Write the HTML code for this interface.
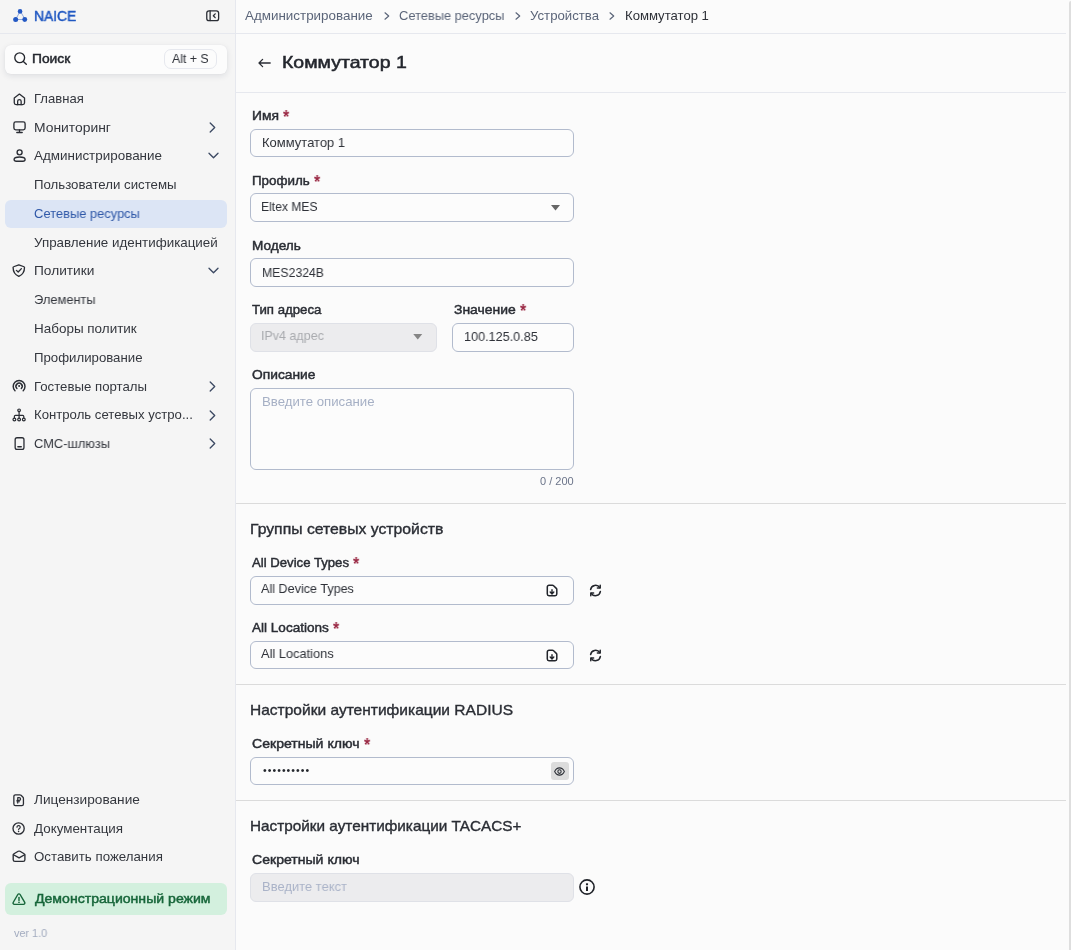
<!DOCTYPE html>
<html lang="ru"><head><meta charset="utf-8"><title>NAICE — Коммутатор 1</title>
<style>
html,body{margin:0;padding:0}
body{width:1071px;height:950px;position:relative;overflow:hidden;background:#fbfbfb;font-family:"Liberation Sans",sans-serif}
.abs,.t,.box,.ln,svg.i{position:absolute}
.t{will-change:transform;white-space:nowrap;line-height:20px;height:20px;transform-origin:0 50%;font-family:"Liberation Sans",sans-serif}
.t.sec{-webkit-text-stroke:0.35px currentColor}
.t.sb{-webkit-text-stroke:0.46px currentColor}
.t.sb2{-webkit-text-stroke:0.5px currentColor}
.side{left:0;top:0;width:235px;height:950px;background:#f5f5f5;border-right:1px solid #e6e8ee}
.ln{height:1px;background:#e6e8ee}
.ln.s{background:#dbdbdb}
.box{box-sizing:border-box;border:1px solid #b2bbcd;border-radius:6px;background:#fcfcfc}
.box.dis{background:#ececee;border-color:#dfe1e7}
.pill{position:absolute;border-radius:6px}
svg.i{overflow:visible;fill:none;stroke:#2a2d34;stroke-width:1.35;stroke-linecap:round;stroke-linejoin:round}
aside,main,nav,header,form,section{display:contents}
</style></head><body>
<aside>
<nav>
<div class="abs side"></div>
<div class="ln" style="left:0;top:33px;width:235px"></div>
<div class="pill" style="left:5px;top:45px;width:222px;height:29px;background:#fcfcfc;box-shadow:0 2px 6px rgba(20,30,60,.10),0 0 1px rgba(20,30,60,.08)"></div>
<div class="abs" style="left:164px;top:49px;width:53px;height:20px;box-sizing:border-box;border:1px solid #e6e8ee;border-radius:7px;background:#fcfcfc"></div>
<div class="pill" style="left:5px;top:200px;width:222px;height:28px;background:#dce5f5"></div>
<div class="pill" style="left:5px;top:883px;width:222px;height:31.5px;background:#d3f0de"></div>
<svg class="i" style="left:13px;top:9px;stroke:none;fill:#2459c4" width="15" height="14" viewBox="0 0 15 14"><circle cx="7.050" cy="2.400" r="2.300"/><circle cx="2.650" cy="10.500" r="2.500"/><circle cx="11.750" cy="10.450" r="2.450"/><path d="M7.050 2.400 2.650 10.500h9.100z" fill="none" stroke="#2459c4" stroke-width=".75" stroke-opacity=".65"/></svg>
<svg class="i" style="left:205.6px;top:10px" width="13.4" height="11.5" viewBox="0 0 14 12"><rect x=".8" y=".8" width="12.4" height="10.4" rx="2.4"/><path d="M4.3 1v10" /><path d="M9.6 4 7.7 6l1.9 2"/></svg>
<svg class="i" style="left:13.5px;top:52.1px;stroke:#24272e" width="13" height="13" viewBox="0 0 13 13"><circle cx="5.7" cy="5.7" r="4.9"/><path d="M9.4 9.4 12.3 12.3"/></svg>
<svg class="i" style="left:12.9px;top:92.9px" width="12.8" height="12.6" viewBox="0 0 13 13"><path d="M1.2 5.2 6.5 1.1l5.3 4.1v4.9a1.9 1.9 0 0 1-1.9 1.9H3.1a1.9 1.9 0 0 1-1.9-1.9z"/><path d="M4.7 12V8.6a1.8 1.8 0 0 1 3.6 0V12"/></svg>
<svg class="i" style="left:12.5px;top:121px" width="13" height="13" viewBox="0 0 13 13"><rect x=".9" y=".9" width="11.2" height="7.9" rx="1.8"/><path d="M6.5 8.9v2.5M3.8 11.5h5.4"/></svg>
<svg class="i" style="left:12.5px;top:149px" width="13" height="13" viewBox="0 0 13 13"><circle cx="6.6" cy="3.3" r="2.5"/><path d="M1.1 10.6c0-1.7 2.4-2.6 5.5-2.6s5.5.9 5.5 2.6c0 1.2-1 1.6-2.2 1.6H3.300c-1.200 0-2.200-.4-2.200-1.600z"/></svg>
<svg class="i" style="left:12.1px;top:264.3px" width="14" height="13.3" viewBox="0 0 14 14" preserveAspectRatio="none"><path d="M6.8.9 1.6 2.9c-.3.1-.5.4-.5.700 0 4.600 1.600 7.400 5.700 9.400 4.100-2 5.700-4.800 5.700-9.400 0-.3-.2-.6-.5-.7z"/><path d="M4.400 6.700 6.200 8.400 9.400 4.900"/></svg>
<svg class="i" style="left:12px;top:379px;stroke-width:1.45" width="14" height="14" viewBox="0 0 14 14"><path d="M3 11.700A5.900 5.900 0 1 1 11.200 11.700"/><path d="M4.900 9.500A3.100 3.100 0 1 1 9.300 9.500"/><circle cx="7.100" cy="7.100" r="1" fill="#2a2d34" stroke="none"/></svg>
<svg class="i" style="left:12px;top:408px;stroke-width:1.2" width="14" height="14" viewBox="0 0 14 14"><circle cx="7.100" cy="2.300" r="1.300"/><path d="M7.100 3.700v6.300M2.400 10V8.400c0-.6.400-1 1-1h7.400c.6 0 1 .4 1 1V10"/><circle cx="2.400" cy="11.500" r="1.400"/><circle cx="7.100" cy="11.500" r="1.400"/><circle cx="11.800" cy="11.500" r="1.400"/></svg>
<svg class="i" style="left:13.5px;top:437.3px" width="11.5" height="13.4" viewBox="0 0 12 14" preserveAspectRatio="none"><rect x="1.200" y=".8" width="9.200" height="12.200" rx="2"/><path d="M4 10.200h3.600"/></svg>
<svg class="i" style="left:13.3px;top:793.500px" width="11.4" height="12.3" viewBox="0 0 12 13" preserveAspectRatio="none"><path d="M.9 2.600C.9 1.600 1.600.9 2.600.9h4.600c.5 0 .9.200 1.300.5l2 2c.3.400.5.800.5 1.300v5.900c0 1-.7 1.700-1.700 1.700H2.600c-1 0-1.700-.7-1.700-1.700z"/><path d="M5 9.600V3.900h1.500a1.400 1.400 0 0 1 0 2.900H4.200M4.200 8.200h2.600" stroke-width="1.300"/></svg>
<svg class="i" style="left:12px;top:821.7px" width="13" height="13" viewBox="0 0 13 13"><circle cx="6.600" cy="6.500" r="5.600"/><path d="M5 5.200a1.600 1.600 0 1 1 2.400 1.400c-.5.300-.8.600-.8 1.100" stroke-width="1.200"/><circle cx="6.600" cy="9.500" r=".8" fill="#2a2d34" stroke="none"/></svg>
<svg class="i" style="left:12.1px;top:850.400px" width="14" height="12.100" viewBox="0 0 14 13" preserveAspectRatio="none"><path d="M1.200 5.400c0-.6.300-1.100.8-1.400L6.200 1.400c.6-.3 1.200-.3 1.800 0l4.100 2.600c.5.300.8.800.8 1.400v5c0 1-.8 1.800-1.800 1.800H3c-1 0-1.800-.8-1.800-1.800z"/><path d="M1.500 5.100 7.100 8.500l5.500-3.400"/></svg>
<svg class="i" style="left:12.2px;top:892.7px;stroke:#17663a;stroke-width:1.45" width="13.8" height="12.3" viewBox="0 0 14 13" preserveAspectRatio="none"><path d="M5.900 1.600c.5-.9 1.800-.9 2.300 0l4.700 8.400c.5.900-.2 2-1.200 2H2.400c-1 0-1.700-1.100-1.200-2z"/><path d="M7.100 4.800v3"/><circle cx="7.100" cy="9.800" r=".9" fill="#17663a" stroke="none"/></svg>
<svg class="i" style="left:209.3px;top:122px;stroke:#3d4a63" width="7" height="11" viewBox="0 0 7 11"><path d="M1.200 1 5.700 5.500 1.200 10"/></svg>
<svg class="i" style="left:209.3px;top:381px;stroke:#3d4a63" width="7" height="11" viewBox="0 0 7 11"><path d="M1.200 1 5.700 5.500 1.200 10"/></svg>
<svg class="i" style="left:209.3px;top:409.5px;stroke:#3d4a63" width="7" height="11" viewBox="0 0 7 11"><path d="M1.200 1 5.700 5.500 1.200 10"/></svg>
<svg class="i" style="left:209.3px;top:438px;stroke:#3d4a63" width="7" height="11" viewBox="0 0 7 11"><path d="M1.200 1 5.700 5.500 1.200 10"/></svg>
<svg class="i" style="left:208px;top:152.300px;stroke:#3d4a63" width="11" height="7" viewBox="0 0 11 7"><path d="M1 1.200 5.500 5.700 10 1.200"/></svg>
<svg class="i" style="left:208px;top:267.300px;stroke:#3d4a63" width="11" height="7" viewBox="0 0 11 7"><path d="M1 1.200 5.500 5.700 10 1.200"/></svg>
<div class="t sb2" style="left:34px;top:6.25px;font-size:14.4px;color:#2058c2;transform:scaleX(0.9593)">NAICE</div>
<div class="t sb" style="left:32px;top:48.50px;font-size:13px;color:#24272e;transform:scaleX(1.0625)">Поиск</div>
<div class="t" style="left:172px;top:48.50px;font-size:13px;color:#2e3138;transform:scaleX(0.9474)">Alt + S</div>
<div class="t" style="left:34px;top:88.50px;font-size:13px;color:#34373e;transform:scaleX(1.0052)">Главная</div>
<div class="t" style="left:34px;top:117.50px;font-size:13px;color:#34373e;transform:scaleX(1.0669)">Мониторинг</div>
<div class="t" style="left:34px;top:145.50px;font-size:13px;color:#34373e;transform:scaleX(1.0323)">Администрирование</div>
<div class="t" style="left:34px;top:174.50px;font-size:13px;color:#34373e;transform:scaleX(1.0180)">Пользователи системы</div>
<div class="t" style="left:34px;top:203.50px;font-size:13px;color:#2f58a8;transform:scaleX(0.9929)">Сетевые ресурсы</div>
<div class="t" style="left:34px;top:232.50px;font-size:13px;color:#34373e;transform:scaleX(1.0281)">Управление идентификацией</div>
<div class="t" style="left:34px;top:260.50px;font-size:13px;color:#34373e;transform:scaleX(1.0536)">Политики</div>
<div class="t" style="left:34px;top:289.50px;font-size:13px;color:#34373e;transform:scaleX(0.9877)">Элементы</div>
<div class="t" style="left:34px;top:318.50px;font-size:13px;color:#34373e;transform:scaleX(1.0357)">Наборы политик</div>
<div class="t" style="left:34px;top:347.50px;font-size:13px;color:#34373e;transform:scaleX(1.0165)">Профилирование</div>
<div class="t" style="left:34px;top:376.50px;font-size:13px;color:#34373e;transform:scaleX(1.0159)">Гостевые порталы</div>
<div class="t" style="left:34px;top:404.50px;font-size:13px;color:#34373e;transform:scaleX(1.0129)">Контроль сетевых устро...</div>
<div class="t" style="left:34px;top:433.50px;font-size:13px;color:#34373e;transform:scaleX(0.9901)">СМС-шлюзы</div>
<div class="t" style="left:34px;top:789.50px;font-size:13px;color:#34373e;transform:scaleX(1.0495)">Лицензирование</div>
<div class="t" style="left:34px;top:818.50px;font-size:13px;color:#34373e;transform:scaleX(1.0291)">Документация</div>
<div class="t" style="left:34px;top:846.50px;font-size:13px;color:#34373e;transform:scaleX(1.0218)">Оставить пожелания</div>
<div class="t sb" style="left:35px;top:888.50px;font-size:13px;color:#17663a;transform:scaleX(1.0834)">Демонстрационный режим</div>
<div class="t" style="left:14px;top:923.00px;font-size:11px;color:#a2abbf;transform:scaleX(0.9853)">ver 1.0</div>
</nav>
</aside>
<main>
<div class="ln" style="left:236px;top:33px;width:830px"></div>
<div class="ln" style="left:236px;top:92px;width:830px"></div>
<div class="ln s" style="left:236px;top:503px;width:830px"></div>
<div class="ln s" style="left:236px;top:684px;width:830px"></div>
<div class="ln s" style="left:236px;top:800px;width:830px"></div>
<div class="abs" style="left:1069px;top:1px;width:2px;height:949px;background:#dedede;border-radius:2px 0 0 0"></div>
<div class="box" style="left:250px;top:129px;width:324px;height:28px"></div>
<div class="box" style="left:250px;top:193px;width:324px;height:29px"></div>
<div class="box" style="left:250px;top:258px;width:324px;height:29px"></div>
<div class="box dis" style="left:250px;top:323px;width:187px;height:29px"></div>
<div class="box" style="left:452px;top:323px;width:122px;height:29px"></div>
<div class="box" style="left:250px;top:388px;width:324px;height:82px"></div>
<div class="box" style="left:250px;top:576px;width:324px;height:29px"></div>
<div class="box" style="left:250px;top:641px;width:324px;height:28px"></div>
<div class="box" style="left:250px;top:757px;width:324px;height:28px"></div>
<div class="box dis" style="left:250px;top:873px;width:324px;height:29px"></div>
<div class="abs" style="left:550.5px;top:762px;width:18.5px;height:18px;background:#dcdcdc;border-radius:3px"></div>
<svg class="i" style="left:383.500px;top:11.500px;stroke:#5b6579;stroke-width:1.200" width="6" height="8" viewBox="0 0 6 8"><path d="M1 .8 4.700 4 1 7.200"/></svg>
<svg class="i" style="left:514.500px;top:11.500px;stroke:#5b6579;stroke-width:1.200" width="6" height="8" viewBox="0 0 6 8"><path d="M1 .8 4.700 4 1 7.200"/></svg>
<svg class="i" style="left:608.500px;top:11.500px;stroke:#5b6579;stroke-width:1.200" width="6" height="8" viewBox="0 0 6 8"><path d="M1 .8 4.700 4 1 7.200"/></svg>
<svg class="i" style="left:257.500px;top:58.200px;stroke-width:1.300" width="13" height="10" viewBox="0 0 13 10"><path d="M12.200 5H1.200M4.600 1.400 1 5l3.600 3.600"/></svg>
<svg class="i" style="left:550.500px;top:204.500px;stroke:none;fill:#666" width="9" height="5.500" viewBox="0 0 9 5.500"><path d="M0 0h9L4.500 5.500z"/></svg>
<svg class="i" style="left:413px;top:334px;stroke:none;fill:#858585" width="9.500" height="5.500" viewBox="0 0 9 5.500"><path d="M0 0h9L4.500 5.500z"/></svg>
<svg class="i" style="left:546.4px;top:584.1px;stroke:#22252b;stroke-width:1.5" width="12" height="13" viewBox="0 0 12 13"><path d="M1.3 2.900a1.700 1.700 0 0 1 1.700-1.700h3.400c.5 0 .9.200 1.200.5l2.700 2.700c.3.300.5.700.5 1.200v4.500a1.700 1.700 0 0 1-1.700 1.700H3a1.700 1.700 0 0 1-1.700-1.700z"/><path d="M6 5.800v3.900M4.200 8.100 6 9.900l1.800-1.800" stroke-width="1.400"/></svg>
<svg class="i" style="left:546.4px;top:649.2px;stroke:#22252b;stroke-width:1.5" width="12" height="13" viewBox="0 0 12 13"><path d="M1.3 2.900a1.700 1.700 0 0 1 1.700-1.700h3.400c.5 0 .9.200 1.200.5l2.700 2.700c.3.300.5.700.5 1.200v4.500a1.700 1.700 0 0 1-1.700 1.700H3a1.700 1.700 0 0 1-1.700-1.700z"/><path d="M6 5.800v3.900M4.200 8.100 6 9.900l1.800-1.800" stroke-width="1.400"/></svg>
<svg class="i" style="left:588.6px;top:584px;stroke:#22252b;stroke-width:1.5" width="13" height="13" viewBox="0 0 13 13"><path d="M1.600 5.600A5 5 0 0 1 10.800 3.700M11.400 7.400A5 5 0 0 1 2.200 9.300"/><path d="M11.200 1.200v2.800H8.400M1.800 11.800V9h2.800"/></svg>
<svg class="i" style="left:588.6px;top:649px;stroke:#22252b;stroke-width:1.5" width="13" height="13" viewBox="0 0 13 13"><path d="M1.600 5.600A5 5 0 0 1 10.800 3.700M11.400 7.400A5 5 0 0 1 2.200 9.300"/><path d="M11.200 1.200v2.800H8.400M1.800 11.800V9h2.800"/></svg>
<svg class="i" style="left:553.700px;top:766.500px;stroke-width:1.150" width="11" height="9" viewBox="0 0 12 9" preserveAspectRatio="none"><path d="M.7 4.500C1.900 2.200 3.800.9 6 .9s4.100 1.300 5.300 3.600C10.100 6.800 8.200 8.100 6 8.100S1.900 6.800.7 4.500z"/><circle cx="6" cy="4.500" r="1.800"/></svg>
<svg class="i" style="left:579.100px;top:878.900px;stroke:#1f2228;stroke-width:1.600" width="16" height="16" viewBox="0 0 16 16"><circle cx="8" cy="8" r="7.100"/><path d="M8 7.500v4.500" stroke-width="2" stroke-linecap="butt"/><rect x="6.950" y="4.200" width="2.100" height="2.100" rx=".5" fill="#1f2228" stroke="none"/></svg>
<div class="t" style="left:245px;top:5.50px;font-size:13px;color:#5b6579;transform:scaleX(1.0302)">Администрирование</div>
<div class="t" style="left:399px;top:5.50px;font-size:13px;color:#5b6579;transform:scaleX(0.9882)">Сетевые ресурсы</div>
<div class="t" style="left:530px;top:5.50px;font-size:13px;color:#5b6579;transform:scaleX(1.0147)">Устройства</div>
<div class="t" style="left:625px;top:5.50px;font-size:13px;color:#2e3138;transform:scaleX(1.0085)">Коммутатор 1</div>
<div class="t sb2" style="left:282px;top:51.60px;font-size:16.5px;color:#23262d;transform:scaleX(1.1819)">Коммутатор 1</div>
<div class="t sb" style="left:252px;top:105.50px;font-size:13px;color:#2a2d34;transform:scaleX(1.0640)">Имя</div>
<div class="t star" style="left:283px;top:107.40px;font-size:18px;font-weight:700;color:#9a2944;transform:scaleX(0.8857)">*</div>
<div class="t sb" style="left:252px;top:170.50px;font-size:13px;color:#2a2d34;transform:scaleX(1.0286)">Профиль</div>
<div class="t star" style="left:314px;top:172.40px;font-size:18px;font-weight:700;color:#9a2944;transform:scaleX(0.8857)">*</div>
<div class="t sb" style="left:252px;top:235.50px;font-size:13px;color:#2a2d34;transform:scaleX(1.0447)">Модель</div>
<div class="t sb" style="left:252px;top:299.50px;font-size:13px;color:#2a2d34;transform:scaleX(1.0159)">Тип адреса</div>
<div class="t sb" style="left:454px;top:299.50px;font-size:13px;color:#2a2d34;transform:scaleX(1.0707)">Значение</div>
<div class="t star" style="left:520px;top:301.40px;font-size:18px;font-weight:700;color:#9a2944;transform:scaleX(0.8857)">*</div>
<div class="t sb" style="left:252px;top:364.50px;font-size:13px;color:#2a2d34;transform:scaleX(1.0600)">Описание</div>
<div class="t sb" style="left:252px;top:552.50px;font-size:13px;color:#2a2d34;transform:scaleX(1.0115)">All Device Types</div>
<div class="t star" style="left:353px;top:554.40px;font-size:18px;font-weight:700;color:#9a2944;transform:scaleX(0.8857)">*</div>
<div class="t sb" style="left:252px;top:617.50px;font-size:13px;color:#2a2d34;transform:scaleX(1.0419)">All Locations</div>
<div class="t star" style="left:333px;top:619.40px;font-size:18px;font-weight:700;color:#9a2944;transform:scaleX(0.8857)">*</div>
<div class="t sb" style="left:252px;top:733.50px;font-size:13px;color:#2a2d34;transform:scaleX(1.0818)">Секретный ключ</div>
<div class="t star" style="left:364px;top:735.40px;font-size:18px;font-weight:700;color:#9a2944;transform:scaleX(0.8857)">*</div>
<div class="t sb" style="left:252px;top:849.50px;font-size:13px;color:#2a2d34;transform:scaleX(1.0818)">Секретный ключ</div>
<div class="t" style="left:262px;top:132.50px;font-size:13px;color:#2f3239;transform:scaleX(0.9976)">Коммутатор 1</div>
<div class="t" style="left:261px;top:196.50px;font-size:13px;color:#2f3239;transform:scaleX(0.9322)">Eltex MES</div>
<div class="t" style="left:262px;top:262.70px;font-size:13px;color:#2f3239;transform:scaleX(0.9422)">MES2324B</div>
<div class="t" style="left:261px;top:325.50px;font-size:13px;color:#a9abaf;transform:scaleX(0.9609)">IPv4 адрес</div>
<div class="t" style="left:464px;top:326.50px;font-size:13px;color:#2f3239;transform:scaleX(0.9720)">100.125.0.85</div>
<div class="t" style="left:262px;top:391.50px;font-size:13px;color:#a6b0c5;transform:scaleX(1.0155)">Введите описание</div>
<div class="t" style="left:540px;top:471.00px;font-size:11px;color:#6b7489;transform:scaleX(1.0000)">0 / 200</div>
<div class="t" style="left:261px;top:578.50px;font-size:13px;color:#2f3239;transform:scaleX(0.9688)">All Device Types</div>
<div class="t" style="left:261px;top:643.50px;font-size:13px;color:#2f3239;transform:scaleX(0.9865)">All Locations</div>
<div class="t" style="left:262px;top:876.50px;font-size:13px;color:#aab3c8;transform:scaleX(0.9964)">Введите текст</div>
<div class="t" style="left:263px;top:759.50px;font-size:10.5px;color:#24272d;letter-spacing:1.044px">••••••••••</div>
<div class="t sec" style="left:250px;top:519.00px;font-size:14.6px;color:#2a2d34;transform:scaleX(1.0798)">Группы сетевых устройств</div>
<div class="t sec" style="left:250px;top:699.50px;font-size:14.6px;color:#2a2d34;transform:scaleX(1.0638)">Настройки аутентификации RADIUS</div>
<div class="t sec" style="left:250px;top:816.00px;font-size:14.6px;color:#2a2d34;transform:scaleX(1.0492)">Настройки аутентификации TACACS+</div>
</main>
</body></html>
